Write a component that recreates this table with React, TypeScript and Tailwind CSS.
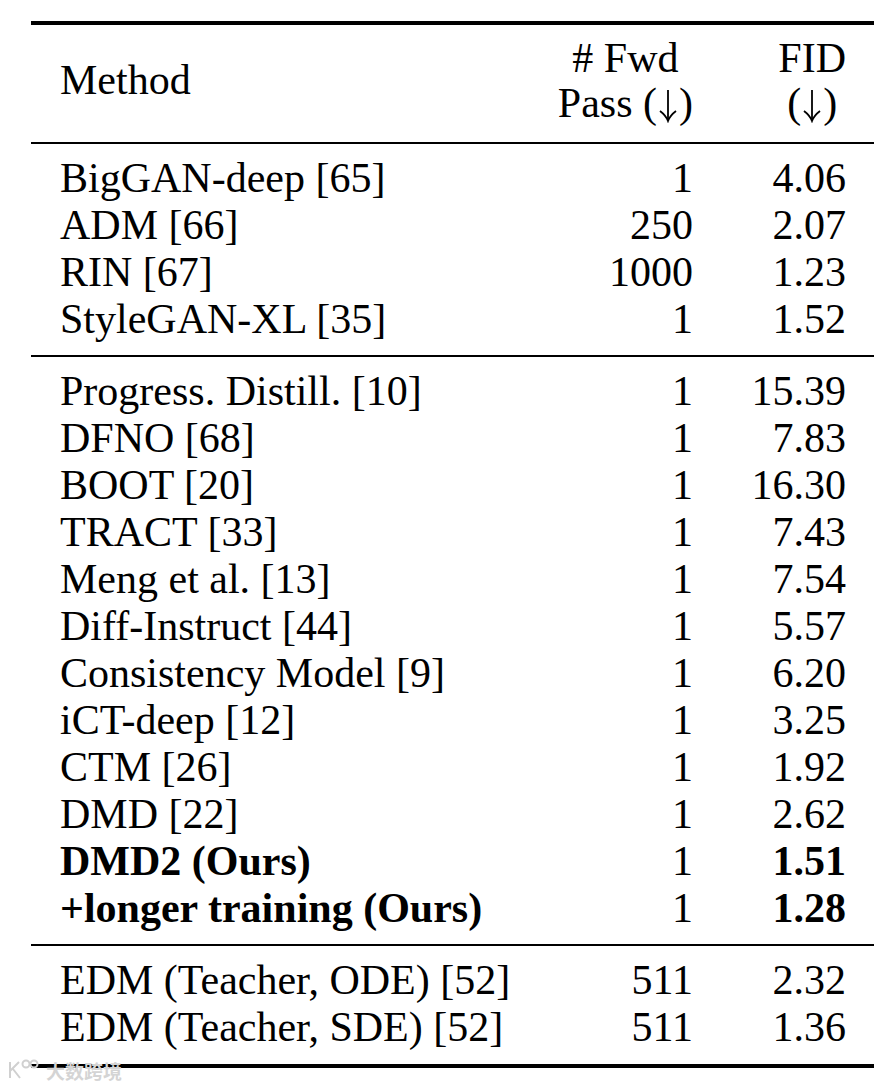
const groups: { name: string; fwd: string; fid: string; bold?: boolean }[][] = [
  [
    { name: "BigGAN-deep [65]", fwd: "1", fid: "4.06" },
    { name: "ADM [66]", fwd: "250", fid: "2.07" },
    { name: "RIN [67]", fwd: "1000", fid: "1.23" },
    { name: "StyleGAN-XL [35]", fwd: "1", fid: "1.52" },
  ],
  [
    { name: "Progress. Distill. [10]", fwd: "1", fid: "15.39" },
    { name: "DFNO [68]", fwd: "1", fid: "7.83" },
    { name: "BOOT [20]", fwd: "1", fid: "16.30" },
    { name: "TRACT [33]", fwd: "1", fid: "7.43" },
    { name: "Meng et al. [13]", fwd: "1", fid: "7.54" },
    { name: "Diff-Instruct [44]", fwd: "1", fid: "5.57" },
    { name: "Consistency Model [9]", fwd: "1", fid: "6.20" },
    { name: "iCT-deep [12]", fwd: "1", fid: "3.25" },
    { name: "CTM [26]", fwd: "1", fid: "1.92" },
    { name: "DMD [22]", fwd: "1", fid: "2.62" },
    { name: "DMD2 (Ours)", fwd: "1", fid: "1.51", bold: true },
    { name: "+longer training (Ours)", fwd: "1", fid: "1.28", bold: true },
  ],
  [
    { name: "EDM (Teacher, ODE) [52]", fwd: "511", fid: "2.32" },
    { name: "EDM (Teacher, SDE) [52]", fwd: "511", fid: "1.36" },
  ],
];

// tall thin down arrow, like the LaTeX \downarrow
function Down() {
  return (
    <svg width="20" height="34" viewBox="0 0 20 34" className="inline-block align-[-6px] mx-[1px]" fill="none" stroke="black" strokeWidth="1.8">
      <path d="M10 1v31" />
      <path d="M2 22c4 3 6.5 6 8 10c1.5-4 4-7 8-10" />
    </svg>
  );
}

export default function App() {
  return (
    <div className="relative w-[888px] h-[1088px] bg-white text-black font-['Liberation_Serif','Times_New_Roman',serif] text-[42px]">
      <div className="pt-[21px] pl-[31px] pr-[14px]">
        <div className="h-[4px] bg-black" />

        {/* header */}
        <div className="flex items-center h-[117px] pb-[6px] pl-[29px] pr-[28px] leading-[45px]">
          <div className="flex-1">Method</div>
          <div className="w-[135px] flex flex-col items-end">
            <div className="flex flex-col items-center">
              <span># Fwd</span>
              <span className="whitespace-nowrap">Pass (<Down />)</span>
            </div>
          </div>
          <div className="w-[153px] flex flex-col items-end">
            <div className="flex flex-col items-center">
              <span>FID</span>
              <span className="whitespace-nowrap">(<Down />)</span>
            </div>
          </div>
        </div>

        {groups.map((rows, gi) => (
          <div key={gi}>
            <div className="h-[2px] bg-black" />
            <div className="pt-[11px] pb-[12px] pl-[29px] pr-[28px]">
              {rows.map((r) => (
                <div key={r.name} className="flex h-[47px] leading-[47px] whitespace-nowrap">
                  <div className={r.bold ? "flex-1 font-bold" : "flex-1"}>{r.name}</div>
                  <div className="w-[135px] text-right">{r.fwd}</div>
                  <div className={r.bold ? "w-[153px] text-right font-bold" : "w-[153px] text-right"}>{r.fid}</div>
                </div>
              ))}
            </div>
          </div>
        ))}

        <div className="h-[4px] mt-[1px] bg-black" />
      </div>

      {/* watermark */}
      <div className="absolute left-[6px] top-[1058px] flex items-center gap-[4px] text-[#d4d4d4]">
        <svg width="36" height="24" viewBox="0 0 36 24" fill="none" stroke="#d0d0d0" strokeWidth="2">
          <path d="M4 4v16M4 13l9-9M7 11l7 9" />
          <circle cx="20" cy="6" r="3.5" />
          <circle cx="28" cy="6" r="3.5" />
        </svg>
        <span className="text-[19px] leading-none font-['Noto_Sans_CJK_SC',sans-serif] font-bold">大数跨境</span>
      </div>
    </div>
  );
}
